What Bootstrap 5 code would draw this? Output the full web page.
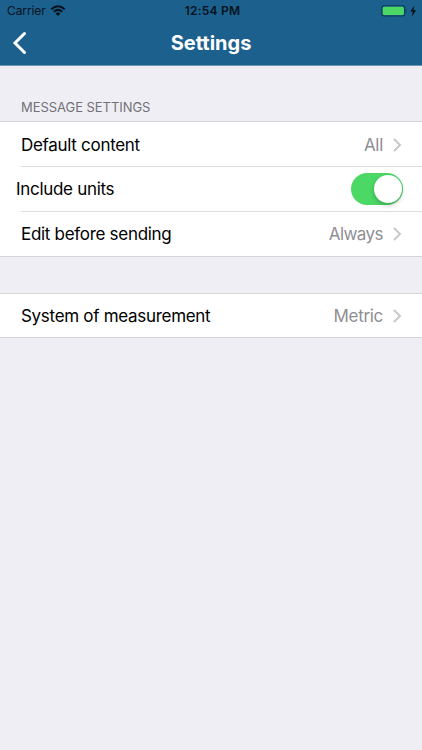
<!DOCTYPE html>
<html lang="en">
<head>
<meta charset="utf-8">
<meta name="viewport" content="width=device-width, initial-scale=1">
<title>Settings</title>
<link href="https://cdn.jsdelivr.net/npm/bootstrap@5.3.0/dist/css/bootstrap.min.css" rel="stylesheet">
<style>
body { background: #efeef4; font-family: Inter, "Liberation Sans", sans-serif; color: #000; height: 750px; overflow: hidden; }
.app-header { background: #1c608e; height: 66px; border-bottom: 1px solid #7095b2; }
.status-bar { height: 22px; padding: 0 5px 0 7px; font-size: 12px; line-height: 22px; color: #06121b; }
.carrier { letter-spacing: -.1px; }
.status-time { font-weight: 600; letter-spacing: .25px; margin-left: 1px; }
.title-bar { height: 42px; padding: 0 12px; }
.page-title { font-size: 20px; font-weight: 700; line-height: 40px; padding-bottom: 1px; }
.section-label { height: 55px; padding: 33px 21px 0; font-size: 13px; line-height: 16px; color: #727277; letter-spacing: -.05px; }
.settings-group { border-top: 1px solid #d5d4d9; border-bottom: 1px solid #d5d4d9; background: #fff; font-size: 17px; line-height: 44px; }
.settings-group + .settings-group { margin-top: 36px; }
.setting { height: 45px; padding: 0 20px 0 0; margin-left: 21px; border: 0; border-bottom: 1px solid #dddce0; color: #000; background: #fff; letter-spacing: -.3px; }
.setting:last-child { height: 44px; border-bottom: 0; }
.setting:only-child { height: 43px; padding-top: 1px; }
.first-row { padding-top: 1px; }
.switch-row { padding-right: 19px; }
.switch-row .setting-name { margin-left: -5px; }
.setting-value { color: #8e8e93; }
.value-always { letter-spacing: -.55px; }
.chevron { margin-left: 10px; }
.settings-switch { width: 52px; height: 32px; border-radius: 16px; background: #4bd865; padding: 2px 1.5px; }
.switch-knob { width: 28px; height: 28px; background: #fff; box-shadow: 0 2px 4px rgba(0,0,0,.25); }
</style>
<script src="https://cdn.jsdelivr.net/npm/bootstrap@5.3.0/dist/js/bootstrap.bundle.min.js"></script>
</head>
<body>
<header class="app-header">
  <div class="status-bar d-flex align-items-center">
    <div class="d-flex align-items-center col">
      <span class="carrier">Carrier</span>
      <svg class="ms-1" width="16" height="12" viewBox="0 0 16 12" aria-hidden="true"><g fill="none" stroke="#06121b" stroke-width="2"><path d="M1.3 4.2Q8-1.8 14.7 4.2M3.8 6.7Q8 3.1 12.2 6.7"/></g><path fill="#06121b" d="M5.6 8.5Q8 6.6 10.4 8.5L8 10.9Z"/></svg>
    </div>
    <span class="status-time">12:54 PM</span>
    <div class="d-flex align-items-center justify-content-end col">
      <svg width="36" height="12" viewBox="0 0 36 12" aria-hidden="true"><rect x=".8" y=".8" width="23" height="10.2" rx="2.5" fill="#1c608e" stroke="#0c3e55" stroke-width="1.1"/><rect x="1.7" y="1.7" width="21.2" height="8.4" rx="1.5" fill="#4bd865"/><path d="M25.2 4.2q1.6 1.7 0 3.6z" fill="#0c3e55"/><path d="M33.4 .8 29.2 6.6h2.6l-1 4.8 4.4-6.1h-2.7z" fill="#06121b"/></svg>
    </div>
  </div>
  <div class="title-bar d-flex align-items-center text-white">
    <div class="col"><a href="#" class="d-flex" aria-label="Back"><svg width="16" height="24" viewBox="0 0 16 24"><path d="M12.5 2.5 3 12l9.5 9.5" fill="none" stroke="#fff" stroke-width="3" stroke-linecap="round"/></svg></a></div>
    <h1 class="page-title m-0">Settings</h1>
    <div class="col"></div>
  </div>
</header>
<main>
  <div class="section-label">MESSAGE SETTINGS</div>
  <div class="settings-group list-group list-group-flush rounded-0">
    <div class="setting first-row list-group-item d-flex align-items-center"><span class="me-auto">Default content</span><span class="setting-value">All</span><svg class="chevron" width="9" height="14" viewBox="0 0 9 14"><path d="m1 1 6 6-6 6" fill="none" stroke="#c7c7cc" stroke-width="1.9"/></svg></div>
    <div class="setting switch-row list-group-item d-flex align-items-center"><span class="setting-name me-auto">Include units</span><span class="settings-switch d-flex justify-content-end align-items-center" role="switch" aria-checked="true" aria-label="Include units"><span class="switch-knob rounded-circle"></span></span></div>
    <div class="setting list-group-item d-flex align-items-center"><span class="me-auto">Edit before sending</span><span class="setting-value value-always">Always</span><svg class="chevron" width="9" height="14" viewBox="0 0 9 14"><path d="m1 1 6 6-6 6" fill="none" stroke="#c7c7cc" stroke-width="1.9"/></svg></div>
  </div>
  <div class="settings-group list-group list-group-flush rounded-0">
    <div class="setting list-group-item d-flex align-items-center"><span class="me-auto">System of measurement</span><span class="setting-value">Metric</span><svg class="chevron" width="9" height="14" viewBox="0 0 9 14"><path d="m1 1 6 6-6 6" fill="none" stroke="#c7c7cc" stroke-width="1.9"/></svg></div>
  </div>
</main>
</body>
</html>
